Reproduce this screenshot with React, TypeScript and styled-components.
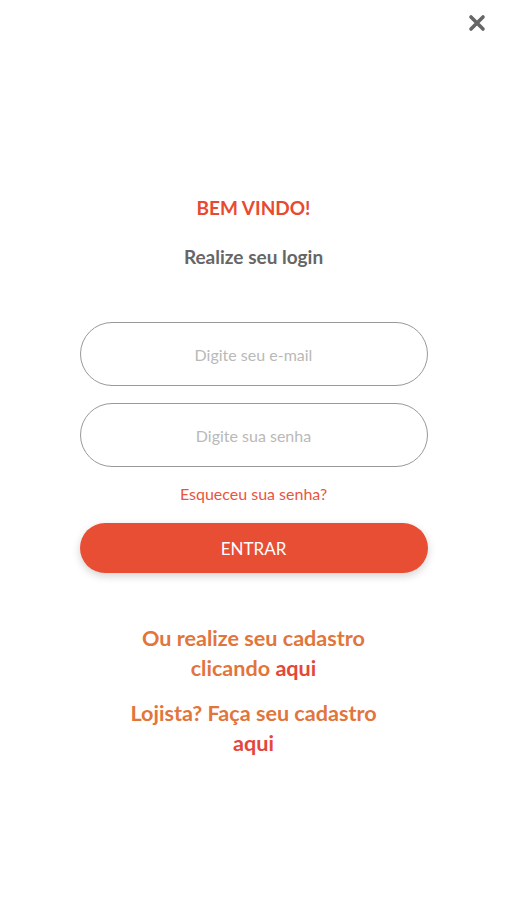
import styled, { createGlobalStyle } from 'styled-components';

const GlobalStyle = createGlobalStyle`
  html, body {
    margin: 0;
    padding: 0;
    background: #ffffff;
    font-family: Lato, 'Open Sans', sans-serif;
  }
  * { box-sizing: border-box; }
`;

const App = () => {
  return (
    <Page>
      <GlobalStyle />
      <TopBar>
        <CloseButton aria-label="Fechar">
          <svg width="18" height="18" viewBox="0 0 18 18">
            <path d="M3 3 L15 15 M15 3 L3 15" stroke="#666" strokeWidth="3.6" strokeLinecap="round" />
          </svg>
        </CloseButton>
      </TopBar>
      <Welcome>BEM VINDO!</Welcome>
      <SubTitle>Realize seu login</SubTitle>
      <Form>
        <Input type="email" placeholder="Digite seu e-mail" />
        <Input type="password" placeholder="Digite sua senha" />
        <Forgot>Esqueceu sua senha?</Forgot>
        <SubmitButton type="button">ENTRAR</SubmitButton>
      </Form>
      <SignupText>
        Ou realize seu cadastro
        <br />
        clicando <Here>aqui</Here>
      </SignupText>
      <SignupText $compact>
        Lojista? Faça seu cadastro
        <br />
        <Here>aqui</Here>
      </SignupText>
    </Page>
  );
};

const Page = styled.div`
  width: 507px;
  min-height: 900px;
  display: flex;
  flex-direction: column;
  align-items: center;
  background: #fff;
`;

const TopBar = styled.div`
  width: 100%;
  display: flex;
  justify-content: flex-end;
  padding: 14px 21px 0 0;
  height: 180px;
`;

const CloseButton = styled.button`
  background: none;
  border: none;
  padding: 0;
  width: 18px;
  height: 18px;
  cursor: pointer;
  display: flex;
`;

const Welcome = styled.div`
  color: #e8492f;
  font-size: 19px;
  font-weight: 700;
  line-height: 26px;
  margin-top: 15px;
`;

const SubTitle = styled.div`
  color: #666;
  font-size: 19px;
  font-weight: 700;
  line-height: 26px;
  margin-top: 23px;
`;

const Form = styled.div`
  width: 348px;
  display: flex;
  flex-direction: column;
  align-items: center;
  margin-top: 52px;
`;

const Input = styled.input`
  width: 100%;
  height: 64px;
  border: 1.6px solid #999;
  border-radius: 32px;
  background: #fff;
  text-align: center;
  font-family: Lato, sans-serif;
  font-size: 16px;
  color: #444;
  outline: none;
  margin-bottom: 17px;
  &::placeholder {
    color: #b9b9b9;
  }
`;

const Forgot = styled.div`
  color: #e8553f;
  font-size: 16px;
  line-height: 20px;
`;

const SubmitButton = styled.button`
  width: 100%;
  height: 50px;
  margin-top: 19px;
  border: none;
  border-radius: 25px;
  background: #e84e33;
  color: #fff;
  font-family: Lato, sans-serif;
  font-size: 17px;
  box-shadow: 0 3px 8px rgba(0, 0, 0, 0.18);
  cursor: pointer;
`;

const SignupText = styled.div<{ $compact?: boolean }>`
  color: #e2753c;
  font-size: 21.6px;
  font-weight: 700;
  line-height: 30px;
  text-align: center;
  margin-top: ${({ $compact }) => ($compact ? '15px' : '50px')};
`;

const Here = styled.span`
  color: #e4473a;
`;

export default App;
